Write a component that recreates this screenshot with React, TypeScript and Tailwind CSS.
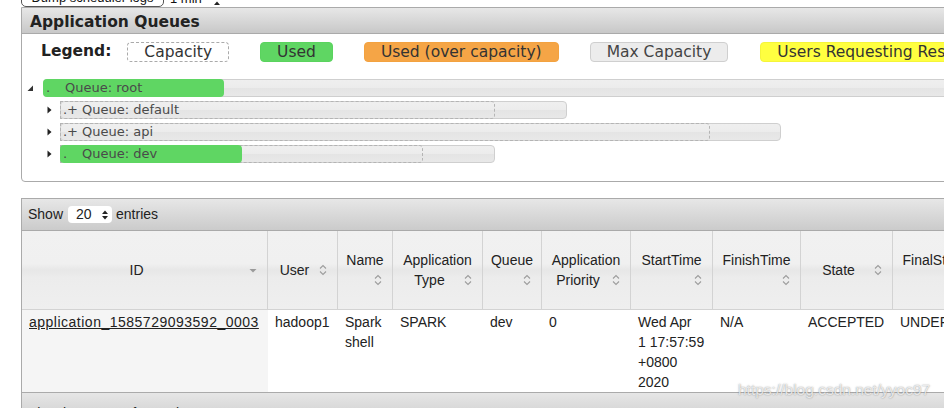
import React from "react"

type SortMode = "desc" | "inline" | "below"

interface Column {
  width: string
  lines: string[]
  icon: SortMode
}

const columns: Column[] = [
  { width: "246px", lines: ["ID"], icon: "desc" },
  { width: "70px", lines: ["User"], icon: "inline" },
  { width: "55px", lines: ["Name"], icon: "below" },
  { width: "90px", lines: ["Application", "Type"], icon: "inline" },
  { width: "59px", lines: ["Queue"], icon: "below" },
  { width: "89px", lines: ["Application", "Priority"], icon: "inline" },
  { width: "82px", lines: ["StartTime"], icon: "below" },
  { width: "88px", lines: ["FinishTime"], icon: "below" },
  { width: "92px", lines: ["State"], icon: "inline" },
  { width: "90px", lines: ["FinalStatus"], icon: "below" },
]

const row: string[][] = [
  ["application_1585729093592_0003"],
  ["hadoop1"],
  ["Spark", "shell"],
  ["SPARK"],
  ["dev"],
  ["0"],
  ["Wed Apr", "1 17:57:59", "+0800", "2020"],
  ["N/A"],
  ["ACCEPTED"],
  ["UNDEFINED"],
]

const queues = [
  { name: "default", width: 507, capacity: 435, used: 0, plus: true },
  { name: "api", width: 721, capacity: 650, used: 0, plus: true },
  { name: "dev", width: 435, capacity: 363, used: 182, plus: false },
]

function SortBoth() {
  return (
    <svg width="16" height="16" viewBox="0 0 16 16" className="shrink-0">
      <path d="M5 6.5l3-3 3 3M5 9.5l3 3 3-3" fill="none" stroke="#9d9d9d" strokeWidth="1.1" />
    </svg>
  )
}

function SortDesc() {
  return (
    <svg width="16" height="16" viewBox="0 0 16 16" className="shrink-0">
      <polygon points="4.5,7 11.5,7 8,10.5" fill="#9a9a9a" />
    </svg>
  )
}

function UpDown({ color = "#222" }: { color?: string }) {
  return (
    <svg width="6" height="10" viewBox="0 0 6 10" className="shrink-0">
      <polygon points="0,4 3,0.5 6,4" fill={color} />
      <polygon points="0,6 3,9.5 6,6" fill={color} />
    </svg>
  )
}

function HeadCell({ col }: { col: Column }) {
  const last = col.lines[col.lines.length - 1]
  return (
    <div className="h-[79px] border-r border-b border-[#d3d3d3] px-[6px] flex flex-col justify-center text-[14px] leading-[20px] text-[#222] bg-[linear-gradient(to_bottom,#f1f1f1_0%,#f0f0f0_42%,#e7e7e7_50%,#ececec_60%,#efefef_100%)]">
      {col.icon === "below" ? (
        <>
          {col.lines.map((l) => (
            <div key={l} className="text-center whitespace-nowrap">
              {l}
            </div>
          ))}
          <div className="flex justify-end items-center h-[20px]">
            <SortBoth />
          </div>
        </>
      ) : (
        <>
          {col.lines.slice(0, -1).map((l) => (
            <div key={l} className="text-center whitespace-nowrap">
              {l}
            </div>
          ))}
          <div className="flex items-center">
            <span className="flex-1 text-center whitespace-nowrap">{last}</span>
            {col.icon === "desc" ? <SortDesc /> : <SortBoth />}
          </div>
        </>
      )}
    </div>
  )
}

function QueueBar({
  name,
  width,
  capacity,
  used,
  plus,
}: {
  name: string
  width: number
  capacity: number
  used: number
  plus: boolean
}) {
  return (
    <div
      className="relative h-[18px] shrink-0 rounded-[4px] border border-[#cfcfcf] bg-[linear-gradient(to_bottom,#efefef_0%,#ececec_50%,#e4e4e4_50%,#e8e8e8_100%)]"
      style={{ width }}
    >
      {capacity > 0 && (
        <div
          className="absolute -left-px -top-px -bottom-px rounded-r-[4px] border border-dashed border-[#b4b4b4]"
          style={{ width: capacity }}
        />
      )}
      {used > 0 && (
        <div className="absolute -left-px -top-px -bottom-px rounded-[4px] bg-[#5fd663]" style={{ width: used }} />
      )}
      <div className="absolute left-[2px] top-0 bottom-0 flex items-center whitespace-nowrap text-[13px] leading-[16px] text-[#4a4a4a]">
        <span className="w-[4px]">.</span>
        <span className="w-[10px]">{plus ? "+" : ""}</span>
        <span className="ml-[5px]">Queue: {name}</span>
      </div>
    </div>
  )
}

export default function App() {
  return (
    <div className="relative w-[944px] h-[408px] overflow-hidden bg-white font-['Liberation_Sans',Arial,sans-serif]">
      <div className="w-[1120px]">
        {/* top controls, cut off by the page edge */}
        <div className="h-[7px] overflow-hidden flex items-end pl-[21px]">
          <div className="h-[18px] w-[143px] shrink-0 rounded-[5px] border border-[#555] bg-white text-center text-[13px] leading-[16px] text-[#111]">
            Dump scheduler logs
          </div>
          <div className="h-[18px] w-[80px] flex items-end gap-[12px] pl-[6px] text-[13px] leading-[16px] text-[#111]">
            <span>1 min</span>
            <span className="mb-[-4px]">
              <UpDown />
            </span>
          </div>
        </div>

        {/* Application Queues */}
        <div className="ml-[21px] w-[1080px] border border-[#aaa] rounded-b-[4px] font-['DejaVu_Sans',Verdana,sans-serif]">
          <div className="h-[26px] border-b border-[#aaa] bg-gradient-to-b from-[#e7e7e7] to-[#c8c8c8] pl-[8px] pt-[2px] text-[15.5px] leading-[24px] font-bold text-[#222]">
            Application Queues
          </div>

          <div className="mt-[8px] ml-[19px] flex items-center h-[20px] text-[15.5px] text-[#333]">
            <span className="font-bold text-[#222] mr-[16px]">Legend:</span>
            <span className="h-[20px] px-[16px] leading-[18px] rounded-[4px] border border-dashed border-[#aaa] bg-white">
              Capacity
            </span>
            <span className="ml-[31px] h-[20px] px-[16px] leading-[18px] rounded-[4px] border border-[#5ad35e] bg-[#5fd663]">
              Used
            </span>
            <span className="ml-[31px] h-[20px] px-[16px] leading-[18px] rounded-[4px] border border-[#f3a240] bg-[#f5a546]">
              Used (over capacity)
            </span>
            <span className="ml-[31px] h-[20px] px-[16px] leading-[18px] rounded-[4px] border border-[#cfcfcf] bg-[#ececec] text-[#444]">
              Max Capacity
            </span>
            <span className="ml-[32px] h-[20px] px-[16px] leading-[18px] rounded-[4px] border border-[#f5f53a] bg-[#ffff40] whitespace-nowrap">
              Users Requesting Resources
            </span>
          </div>

          {/* queue tree */}
          <div className="mt-[15px] pb-[16px]">
            <div className="h-[22px] flex items-center ml-[5px]">
              <svg width="7" height="7" viewBox="0 0 7 7" className="shrink-0">
                <polygon points="6,0.5 6,6 0.5,6" fill="#333" />
              </svg>
              <div className="ml-[9px]">
                <QueueBar name="root" width={1030} capacity={0} used={181} plus={false} />
              </div>
            </div>
            {queues.map((q) => (
              <div key={q.name} className="h-[22px] flex items-center ml-[25px]">
                <svg width="5" height="8" viewBox="0 0 5 8" className="shrink-0">
                  <polygon points="0.5,0.5 4.5,4 0.5,7.5" fill="#222" />
                </svg>
                <div className="ml-[8px]">
                  <QueueBar {...q} />
                </div>
              </div>
            ))}
          </div>
        </div>

        {/* applications table */}
        <div className="mt-[16px] ml-[21px] w-[1080px] border-l border-t border-[#aaa] text-[14px] text-[#222]">
          <div className="h-[32px] border-b border-[#aaa] bg-gradient-to-b from-[#e7e7e7] to-[#cbcbcb] flex items-center pl-[6px]">
            <span>Show</span>
            <span className="ml-[5px] h-[17px] w-[44px] rounded-[4px] bg-white flex items-center pl-[8px] gap-[10px]">
              <span>20</span>
              <UpDown />
            </span>
            <span className="ml-[4px]">entries</span>
          </div>

          <div className="grid grid-cols-[246px_70px_55px_90px_59px_89px_82px_88px_92px_90px]">
            {columns.map((c) => (
              <HeadCell key={c.lines.join(" ")} col={c} />
            ))}
            {row.map((lines, i) => (
              <div
                key={i}
                className={
                  i === 0
                    ? "h-[82px] bg-[#f5f5f5] px-[7px] pt-[2px] leading-[20px] whitespace-nowrap"
                    : "h-[82px] px-[7px] pt-[2px] leading-[20px] whitespace-nowrap"
                }
              >
                {i === 0 ? (
                  <a className="underline tracking-[0.5px] text-[#222]">{lines[0]}</a>
                ) : (
                  lines.map((l) => <div key={l}>{l}</div>)
                )}
              </div>
            ))}
          </div>

          <div className="h-[30px] border-t border-[#aaa] bg-gradient-to-b from-[#e6e6e6] to-[#cdcdcd] pl-[6px] pt-[10px] leading-[20px]">
            Showing 1 to 1 of 1 entries
          </div>
        </div>
      </div>

      {/* watermark */}
      <div className="absolute left-[738px] top-[381px] text-[15.5px] leading-[18px] text-[rgba(255,255,255,0.75)] [text-shadow:0_0_1.5px_rgba(80,80,80,0.7)]">
        https://blog.csdn.net/yyoc97
      </div>
    </div>
  )
}
